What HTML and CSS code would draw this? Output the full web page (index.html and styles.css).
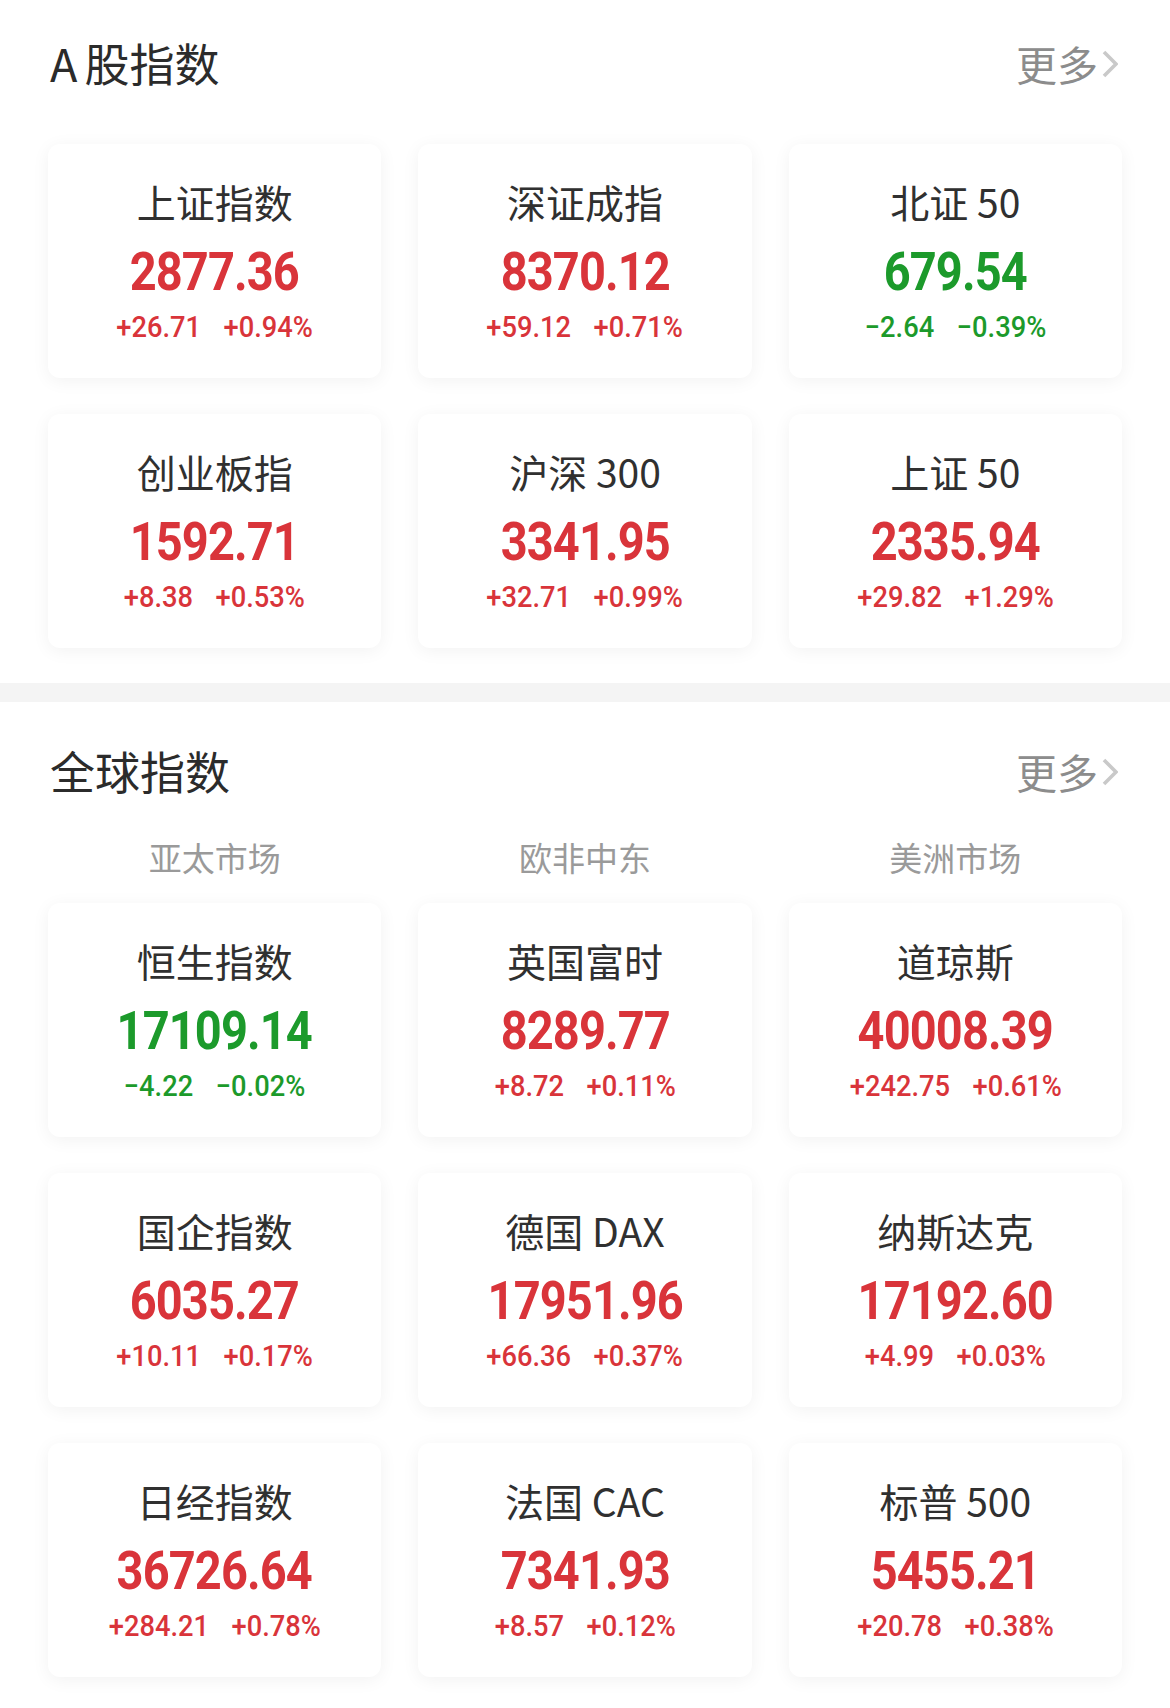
FILE: index.html
```html
<!DOCTYPE html>
<html lang="zh-CN">
<head>
<meta charset="utf-8">
<link rel="stylesheet" href="styles.css">
</head>
<body>
<div class="page">
  <section class="section section-a">
    <div class="head">
      <h2 class="title"><span class="lat">A</span>股指数</h2>
      <div class="more">更多<svg class="chev" viewBox="0 0 16 28" width="16" height="28"><polyline points="2,2 14,14 2,26" fill="none" stroke="#c9c9c9" stroke-width="3.6" stroke-linejoin="miter"/></svg></div>
    </div>
    <div class="grid">
      <div class="card"><div class="name">上证指数</div><div class="num up">2877.36</div><div class="chg up"><span>+26.71</span><span>+0.94%</span></div></div>
      <div class="card"><div class="name">深证成指</div><div class="num up">8370.12</div><div class="chg up"><span>+59.12</span><span>+0.71%</span></div></div>
      <div class="card"><div class="name">北证 50</div><div class="num down">679.54</div><div class="chg down"><span>−2.64</span><span>−0.39%</span></div></div>
      <div class="card"><div class="name">创业板指</div><div class="num up">1592.71</div><div class="chg up"><span>+8.38</span><span>+0.53%</span></div></div>
      <div class="card"><div class="name">沪深 300</div><div class="num up">3341.95</div><div class="chg up"><span>+32.71</span><span>+0.99%</span></div></div>
      <div class="card"><div class="name">上证 50</div><div class="num up">2335.94</div><div class="chg up"><span>+29.82</span><span>+1.29%</span></div></div>
    </div>
  </section>
  <div class="divider"></div>
  <section class="section section-g">
    <div class="head">
      <h2 class="title">全球指数</h2>
      <div class="more">更多<svg class="chev" viewBox="0 0 16 28" width="16" height="28"><polyline points="2,2 14,14 2,26" fill="none" stroke="#c9c9c9" stroke-width="3.6" stroke-linejoin="miter"/></svg></div>
    </div>
    <div class="labels">
      <div class="label">亚太市场</div>
      <div class="label">欧非中东</div>
      <div class="label">美洲市场</div>
    </div>
    <div class="grid">
      <div class="card"><div class="name">恒生指数</div><div class="num down">17109.14</div><div class="chg down"><span>−4.22</span><span>−0.02%</span></div></div>
      <div class="card"><div class="name">英国富时</div><div class="num up">8289.77</div><div class="chg up"><span>+8.72</span><span>+0.11%</span></div></div>
      <div class="card"><div class="name">道琼斯</div><div class="num up">40008.39</div><div class="chg up"><span>+242.75</span><span>+0.61%</span></div></div>
      <div class="card"><div class="name">国企指数</div><div class="num up">6035.27</div><div class="chg up"><span>+10.11</span><span>+0.17%</span></div></div>
      <div class="card"><div class="name">德国 DAX</div><div class="num up">17951.96</div><div class="chg up"><span>+66.36</span><span>+0.37%</span></div></div>
      <div class="card"><div class="name">纳斯达克</div><div class="num up">17192.60</div><div class="chg up"><span>+4.99</span><span>+0.03%</span></div></div>
      <div class="card"><div class="name">日经指数</div><div class="num up">36726.64</div><div class="chg up"><span>+284.21</span><span>+0.78%</span></div></div>
      <div class="card"><div class="name">法国 CAC</div><div class="num up">7341.93</div><div class="chg up"><span>+8.57</span><span>+0.12%</span></div></div>
      <div class="card"><div class="name">标普 500</div><div class="num up">5455.21</div><div class="chg up"><span>+20.78</span><span>+0.38%</span></div></div>
    </div>
  </section>
</div>
</body>
</html>
```

FILE: styles.css
```css
* { box-sizing: border-box; }
html, body { margin: 0; padding: 0; background: #ffffff; }
body {
  width: 1170px;
  font-family: "Noto Sans CJK SC", "Noto Sans", sans-serif;
  color: #333333;
}
.page { display: flex; flex-direction: column; }
.section { padding: 0 48px; }
.section-a { padding-top: 33px; padding-bottom: 35px; }
.section-g { padding-top: 39px; padding-bottom: 31px; }
.head {
  display: flex;
  align-items: center;
  justify-content: space-between;
  height: 60px;
}
.title {
  margin: 0;
  font-size: 45px;
  font-weight: 400;
  line-height: 60px;
  color: #2b2b2b;
  padding-left: 2px;
}
.lat { margin-right: 7px; }
.more {
  display: flex;
  align-items: center;
  font-size: 41px;
  line-height: 60px;
  color: #8c8c8c;
  padding-right: 4px;
}
.chev { display: block; margin-left: 4px; margin-top: 2px; }
.section-a .head { margin-bottom: 51px; }
.section-g .head { margin-bottom: 36px; }
.labels {
  display: grid;
  grid-template-columns: repeat(3, 1fr);
  column-gap: 37px;
  margin-bottom: 26px;
}
.label {
  text-align: center;
  font-size: 33px;
  line-height: 40px;
  color: #9a9a9a;
}
.grid {
  display: grid;
  grid-template-columns: repeat(3, 1fr);
  column-gap: 37px;
  row-gap: 36px;
}
.card {
  height: 234px;
  background: #ffffff;
  border-radius: 12px;
  box-shadow: 0 3px 18px rgba(0, 0, 0, 0.055);
  display: flex;
  flex-direction: column;
  align-items: center;
  padding-top: 35px;
}
.name {
  font-size: 39px;
  line-height: 44px;
  height: 44px;
  color: #303030;
  white-space: nowrap;
}
.num {
  margin-top: 21px;
  font-family: "Roboto", "Liberation Sans", sans-serif;
  font-weight: 700;
  font-size: 54px;
  line-height: 56px;
  height: 56px;
  letter-spacing: -1px;
  transform: scaleX(0.87);
  white-space: nowrap;
}
.chg {
  margin-top: 10px;
  display: flex;
  gap: 24px;
  font-family: "Roboto", "Liberation Sans", sans-serif;
  font-weight: 500;
  font-size: 29px;
  line-height: 34px;
  letter-spacing: 0;
  transform: scaleX(0.94);
}
.up { color: #d9343a; }
.down { color: #1c9a2b; }
.divider { height: 19px; background: #f4f4f4; }
```
